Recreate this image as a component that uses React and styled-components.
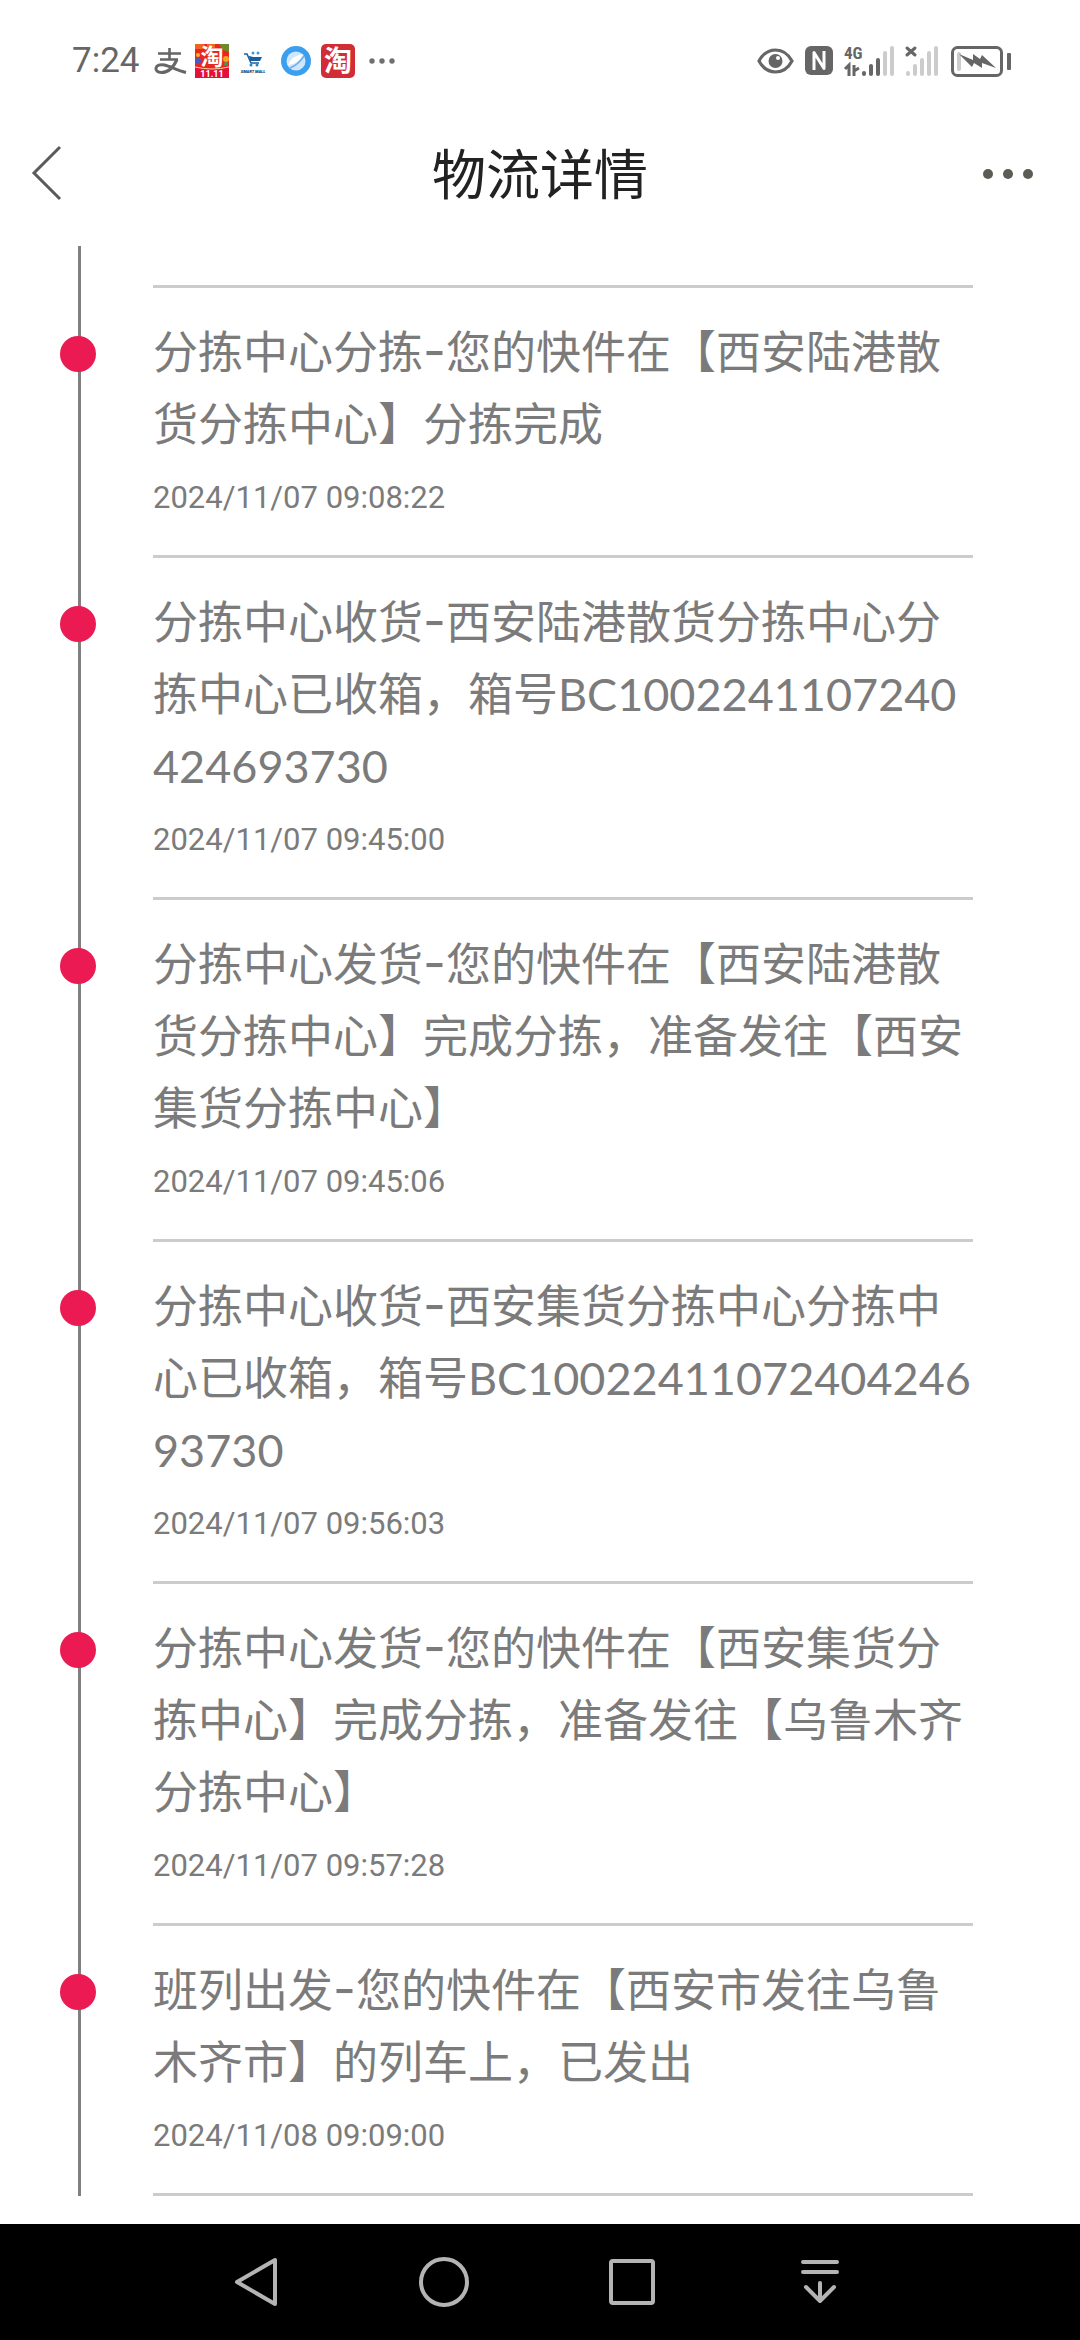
import React from "react";
import styled, { createGlobalStyle } from "styled-components";

const GlobalStyle = createGlobalStyle`
  * {
    box-sizing: border-box;
  }
  body {
    margin: 0;
    background: #fff;
    font-family: Lato, "Noto Sans CJK SC", sans-serif;
  }
  button {
    border: 0;
    padding: 0;
    background: none;
    display: flex;
    align-items: center;
    justify-content: center;
    cursor: pointer;
  }
  svg {
    display: block;
    flex: none;
    overflow: visible;
  }
`;

const Page = styled.div`
  min-height: 100vh;
  display: flex;
  flex-direction: column;
`;

const StatusBar = styled.div`
  height: 122px;
  padding: 0 69px 0 72px;
  display: flex;
  align-items: center;
  justify-content: space-between;
`;

const StatusGroup = styled.div`
  display: flex;
  align-items: center;
  gap: ${(props) => props.$gap}px;
`;

const Clock = styled.time`
  width: 73px;
  font-family: Roboto, sans-serif;
  font-size: 35px;
  line-height: 40px;
  color: #666;
`;

const Header = styled.header`
  height: 104px;
  margin-bottom: 20px;
  padding: 0 32px;
  display: flex;
  align-items: center;
  justify-content: space-between;
`;

const HeaderButton = styled.button`
  width: 72px;
  height: 72px;
  && {
    justify-content: ${(props) => (props.$end ? "flex-end" : "flex-start")};
  }
`;

const Title = styled.h1`
  margin: 0;
  padding-top: 2px;
  font-size: 54px;
  line-height: 80px;
  font-weight: 400;
  color: #222;
`;

const Main = styled.main`
  flex: 1;
`;

const Timeline = styled.ol`
  list-style: none;
  margin: 0 107px 28px 78px;
  padding: 39px 0 0 72px;
  border-left: 3px solid #808080;
`;

const Event = styled.li`
  position: relative;
  padding: 28px 0 33px;
  border-bottom: 3px solid #ccc;
  color: #7b7b7b;

  &:first-child {
    border-top: 3px solid #ccc;
  }
`;

const Dot = styled.span`
  position: absolute;
  top: 48px;
  left: -93px;
  width: 36px;
  height: 36px;
  border-radius: 50%;
  background: #ec1a52;
`;

const Description = styled.p`
  margin: 0 0 14px;
  font-size: 45px;
  line-height: 72px;
  word-break: break-all;
`;

const Dash = styled.span`
  font-family: Inter, sans-serif;
  font-size: 50px;
  line-height: 1;
`;

const EventTime = styled.time`
  display: block;
  font-family: Roboto, sans-serif;
  font-size: 31px;
  line-height: 48px;
`;

const NavBar = styled.nav`
  height: 116px;
  padding: 0 166px 0 162px;
  display: flex;
  background: #000;
`;

const NavButton = styled.button`
  flex: 1;
  height: 116px;
`;

const events = [
  {
    step: "分拣中心分拣",
    detail: "您的快件在【西安陆港散货分拣中心】分拣完成",
    time: "2024/11/07 09:08:22",
  },
  {
    step: "分拣中心收货",
    detail: "西安陆港散货分拣中心分拣中心已收箱，箱号BC1002241107240424693730",
    time: "2024/11/07 09:45:00",
  },
  {
    step: "分拣中心发货",
    detail: "您的快件在【西安陆港散货分拣中心】完成分拣，准备发往【西安集货分拣中心】",
    time: "2024/11/07 09:45:06",
  },
  {
    step: "分拣中心收货",
    detail: "西安集货分拣中心分拣中心已收箱，箱号BC1002241107240424693730",
    time: "2024/11/07 09:56:03",
  },
  {
    step: "分拣中心发货",
    detail: "您的快件在【西安集货分拣中心】完成分拣，准备发往【乌鲁木齐分拣中心】",
    time: "2024/11/07 09:57:28",
  },
  {
    step: "班列出发",
    detail: "您的快件在【西安市发往乌鲁木齐市】的列车上，已发出",
    time: "2024/11/08 09:09:00",
  },
];

const AlipayIcon = () => (
  <svg width="34" height="34" fill="none" stroke="#666">
    <path d="M5 9.5H28M16.5 4V15M7 15.5H25" strokeWidth="2.6" />
    <path
      d="M24 15.500C21 22 16 28.500 8.500 28.500C4.500 28.500 2.500 26.500 3 24C3.500 21.500 7 20 11.500 21C18 22.500 24 26.500 33 28.500"
      strokeWidth="3"
    />
  </svg>
);

const TaobaoSaleIcon = () => (
  <svg width="34" height="34">
    <rect width="34" height="34" fill="#e8281e" />
    <path d="M0 0H9V5H0ZM12 0H20V4H12Z" fill="#f0641e" />
    <path d="M24 0H34V8L28 6Z" fill="#6f8a2c" />
    <circle cx="3" cy="17" r="3" fill="#4a59c8" />
    <circle cx="31" cy="15" r="3" fill="#f2a51f" />
    <circle cx="31" cy="20" r="2" fill="#3c9a5a" />
    <circle cx="3" cy="11" r="2" fill="#f5b52a" />
    <text
      x="17"
      y="21"
      textAnchor="middle"
      fontSize="23"
      fontWeight="700"
      fill="#fff"
      fontFamily='"Noto Sans CJK SC", sans-serif'
    >
      淘
    </text>
    <path d="M0 23Q17 27 34 23V34H0Z" fill="#e4103c" />
    <path d="M0 23Q17 27 34 23" fill="none" stroke="#f6d9a0" />
    <text
      x="17"
      y="33"
      textAnchor="middle"
      fontSize="9"
      fontWeight="700"
      fill="#fff"
      fontFamily="Roboto, sans-serif"
    >
      11.11
    </text>
  </svg>
);

const SmartMallIcon = () => (
  <svg width="34" height="34">
    <path d="M9 11L12 12L13 17H23L25 13H16" fill="#1d5f9e" />
    <path d="M7 10H10L14 19H22" fill="none" stroke="#1d5f9e" strokeWidth="1.500" />
    <circle cx="16" cy="9" r="1.500" fill="#3e9bd8" />
    <circle cx="21" cy="9" r="1.500" fill="#3e9bd8" />
    <circle cx="14" cy="21" r="1.500" fill="#2d83c2" />
    <circle cx="20" cy="21" r="1.500" fill="#2d83c2" />
    <text
      x="16"
      y="29"
      textAnchor="middle"
      fontSize="4"
      fontWeight="900"
      fontStyle="italic"
      fill="#123a66"
      fontFamily="Roboto, sans-serif"
    >
      SMART MALL
    </text>
  </svg>
);

const BrowserIcon = () => (
  <svg width="34" height="34">
    <circle cx="17" cy="17" r="15" fill="#3b9ff0" />
    <circle cx="17" cy="17" r="9.500" fill="#cfe6fb" />
    <path d="M9 21Q12 12 24 10Q20 20 9 21Z" fill="#fff" />
    <path d="M11 24Q19 21 25 12" fill="none" stroke="#6cb2ee" strokeWidth="1.500" />
  </svg>
);

const TaobaoIcon = () => (
  <svg width="34" height="34">
    <rect width="34" height="34" rx="5" fill="#d22c36" />
    <text
      x="17"
      y="27"
      textAnchor="middle"
      fontSize="28"
      fontWeight="700"
      fill="#fff"
      fontFamily='"Noto Sans CJK SC", sans-serif'
    >
      淘
    </text>
  </svg>
);

const MoreNoticesIcon = () => (
  <svg width="34" height="34" fill="#707070">
    <circle cx="9" cy="17" r="2.700" />
    <circle cx="19" cy="17" r="2.700" />
    <circle cx="29" cy="17" r="2.700" />
  </svg>
);

const EyeIcon = () => (
  <svg width="37" height="26" fill="none" stroke="#666">
    <path
      d="M2 13C6 5.500 12 2 18.500 2S31 5.500 35 13C31 20.500 25 24 18.500 24S6 20.500 2 13Z"
      strokeWidth="3.2"
    />
    <circle cx="18.500" cy="13" r="7" fill="#666" stroke="none" />
    <circle cx="21" cy="10" r="2" fill="#fff" stroke="none" />
  </svg>
);

const NfcIcon = () => (
  <svg width="28" height="30">
    <rect width="28" height="29" rx="6" fill="#666" />
    <path
      d="M9 24V6.500L19 22.500V5"
      fill="none"
      stroke="#fff"
      strokeWidth="3"
      strokeLinejoin="round"
    />
  </svg>
);

// Bars stand on the bottom edge, each one step taller than the last
const SignalBars = ({ x, active }) =>
  [5, 12, 18, 25, 30].map((height, i) => (
    <rect
      key={height}
      x={x + i * 7}
      y={30 - height}
      width="4"
      height={height}
      rx="2"
      fill={i < active ? "#666" : "#ccc"}
    />
  ));

const MobileSignalIcon = () => (
  <svg width="50" height="30">
    <text
      x="0"
      y="13"
      fontSize="17"
      fontWeight="700"
      fill="#666"
      fontFamily='"Roboto Condensed", "Liberation Sans Narrow", Roboto, sans-serif'
    >
      4G
    </text>
    <path d="M1 23L5 19V30M10 19V30M10 25L15 22" fill="none" stroke="#666" strokeWidth="3" />
    <SignalBars x={18} active={3} />
  </svg>
);

const NoSignalIcon = () => (
  <svg width="33" height="30">
    <path
      d="M2 2L10 9M10 2L2 9"
      stroke="#666"
      strokeWidth="3"
      strokeLinecap="round"
    />
    <SignalBars x={1} active={0} />
  </svg>
);

const BatteryIcon = () => (
  <svg width="62" height="32">
    <rect
      x="3.500"
      y="2.500"
      width="49"
      height="28"
      rx="5"
      fill="none"
      stroke="#666"
      strokeWidth="3"
    />
    <rect x="8" y="7" width="4" height="19" rx="2" fill="#ccc" />
    <rect x="58" y="8" width="4" height="17" rx="1" fill="#666" />
    <path d="M10 9L24 15L24 9L31 14L33 10L47 23L33 18L33 23L25 18L23 22Z" fill="#666" />
  </svg>
);

export default function App() {
  return (
    <Page>
      <GlobalStyle />
      <StatusBar>
        <StatusGroup $gap={8}>
          <Clock>7:24</Clock>
          <AlipayIcon />
          <TaobaoSaleIcon />
          <SmartMallIcon />
          <BrowserIcon />
          <TaobaoIcon />
          <MoreNoticesIcon />
        </StatusGroup>
        <StatusGroup $gap={11}>
          <EyeIcon />
          <NfcIcon />
          <MobileSignalIcon />
          <NoSignalIcon />
          <BatteryIcon />
        </StatusGroup>
      </StatusBar>

      <Header>
        <HeaderButton aria-label="返回">
          <svg width="28" height="56" fill="none" stroke="#5a5a5a" strokeWidth="3">
            <path d="M28 1L2 27L28 53" />
          </svg>
        </HeaderButton>
        <Title>物流详情</Title>
        <HeaderButton $end aria-label="更多">
          <svg width="66" height="12" fill="#5c5c54">
            <circle cx="6" cy="6" r="5" />
            <circle cx="26" cy="6" r="5" />
            <circle cx="46" cy="6" r="5" />
          </svg>
        </HeaderButton>
      </Header>

      <Main>
        <Timeline>
          {events.map((event) => (
            <Event key={event.time}>
              <Dot />
              <Description>
                {event.step}
                <Dash>-</Dash>
                {event.detail}
              </Description>
              <EventTime>{event.time}</EventTime>
            </Event>
          ))}
        </Timeline>
      </Main>

      <NavBar>
        <NavButton aria-label="后退">
          <svg width="50" height="52" fill="none" stroke="#b4b4b4" strokeWidth="4">
            <path d="M44 4V48L6 26Z" strokeLinejoin="round" />
          </svg>
        </NavButton>
        <NavButton aria-label="主页">
          <svg width="50" height="50" fill="none" stroke="#b4b4b4" strokeWidth="4">
            <circle cx="25" cy="25" r="23" />
          </svg>
        </NavButton>
        <NavButton aria-label="最近任务">
          <svg width="46" height="46" fill="none" stroke="#b4b4b4" strokeWidth="4">
            <rect x="2" y="2" width="42" height="42" rx="2" />
          </svg>
        </NavButton>
        <NavButton aria-label="通知栏">
          <svg
            width="38"
            height="44"
            fill="none"
            stroke="#b4b4b4"
            strokeWidth="4"
            strokeLinecap="round"
            strokeLinejoin="round"
          >
            <path d="M2 2H36M2 12H36M19 23V41M5 27L19 41L33 27" />
          </svg>
        </NavButton>
      </NavBar>
    </Page>
  );
}
